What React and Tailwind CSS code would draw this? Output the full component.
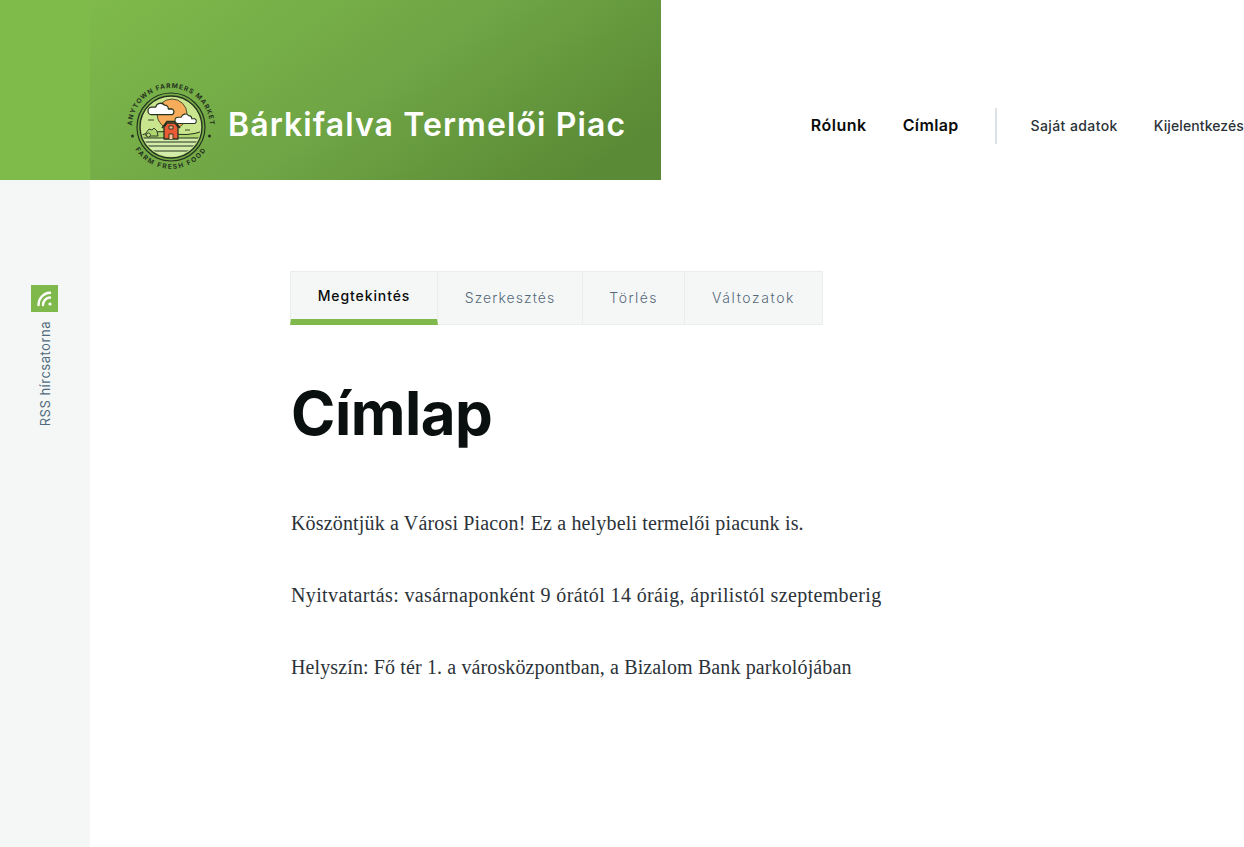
const tabs = [
  { label: "Megtekintés", width: "w-[148px]", tracking: "tracking-[0.9px]", active: true },
  { label: "Szerkesztés", width: "w-[145px]", tracking: "tracking-[1.05px]" },
  { label: "Törlés", width: "w-[102px]", tracking: "tracking-[1.4px]" },
  { label: "Változatok", width: "w-[138px]", tracking: "tracking-[1.6px]" },
];

const paragraphs = [
  { text: "Köszöntjük a Városi Piacon! Ez a helybeli termelői piacunk is.", tracking: "tracking-[0.16px]" },
  { text: "Nyitvatartás: vasárnaponként 9 órától 14 óráig, áprilistól szeptemberig", tracking: "tracking-[0.37px]" },
  { text: "Helyszín: Fő tér 1. a városközpontban, a Bizalom Bank parkolójában", tracking: "tracking-[0.12px]" },
];

function Cloud({ x, y, w }) {
  return (
    <g transform={`translate(${x} ${y}) scale(${w / 22})`}>
      <path
        d="M3 10a3 3 0 0 1 0-6h3a4 4 0 0 1 7-1.500 3 3 0 0 1 3 3h3a2.500 2.500 0 0 1 0 4.500H3z"
        fill="#fff"
        stroke="#26331f"
        strokeWidth="1"
        strokeLinejoin="round"
      />
    </g>
  );
}

function Logo() {
  return (
    <svg viewBox="0 0 88 90" className="h-[90px] w-[88px] shrink-0 overflow-visible" aria-hidden="true">
      <defs>
        <path id="arc-top" d="M5 46A39 39 0 0 1 83 46" />
        <path id="arc-bottom" d="M5.200 62A42 42 0 0 0 82.800 62" />
        <clipPath id="inner-clip">
          <circle cx="44" cy="46" r="29.500" />
        </clipPath>
      </defs>
      <text fill="#26331f" fontFamily="Inter, sans-serif" fontSize="6.600" fontWeight="700" letterSpacing="0.950">
        <textPath href="#arc-top" startOffset="50%" textAnchor="middle">ANYTOWN FARMERS MARKET</textPath>
      </text>
      <text fill="#26331f" fontFamily="Inter, sans-serif" fontSize="6.600" fontWeight="700" letterSpacing="1.500">
        <textPath href="#arc-bottom" startOffset="50%" textAnchor="middle">FARM FRESH FOOD</textPath>
      </text>
      <circle cx="5.500" cy="55" r="1.500" fill="#26331f" />
      <circle cx="82.500" cy="55" r="1.500" fill="#26331f" />
      <circle cx="44" cy="46" r="34" fill="none" stroke="#26331f" strokeWidth="1.200" />
      <circle cx="44" cy="46" r="31" fill="#c9e68e" stroke="#26331f" strokeWidth="1.400" />
      <g clipPath="url(#inner-clip)">
        <circle cx="45" cy="33" r="15" fill="#f6ac5b" stroke="#26331f" strokeWidth="0.800" />
        <path d="M12 55q16-7 32-3t32-2v28H12z" fill="#aed56f" stroke="#26331f" strokeWidth="1" />
        <path d="M12 57h64v22H12z" fill="#d4ecaa" />
        <path d="M12 57h64M12 61h64M12 65h64M12 70h64" stroke="#26331f" strokeWidth="1" />
      </g>
      <path d="M37 58V46l3-4h8l3 4v12z" fill="#e85b34" stroke="#26331f" strokeWidth="1.300" strokeLinejoin="round" />
      <path d="M35 47l5-6.500h8l5 6.500" fill="none" stroke="#26331f" strokeWidth="1.500" />
      <path d="M42 58v-5h4v5M42 45h4v3h-4z" fill="#f6c49a" stroke="#26331f" strokeWidth="0.900" />
      <path d="M19 55v-3l3-4 3 1 2-2 3 3 1 5z" fill="#aed56f" stroke="#26331f" strokeWidth="0.900" />
      <circle cx="21.500" cy="54" r="2" fill="#c9e68e" stroke="#26331f" strokeWidth="0.800" />
      <path d="M21 39h6M58 49h5" stroke="#26331f" strokeWidth="0.900" />
      <Cloud x={21} y={21} w={28} />
      <Cloud x={48} y={32} w={23} />
    </svg>
  );
}

function RssBadge() {
  return (
    <div className="mr-px flex h-[27px] w-[27px] items-center justify-center bg-[#7fb94c]">
      <svg viewBox="0 0 16 16" className="h-[16px] w-[16px]" fill="none" stroke="#fff" strokeWidth="2.400" strokeLinecap="round" aria-hidden="true">
        <path d="M1.500 14C1.500 7.500 6.500 2 13 1.800" />
        <path d="M6 14c0-4 3-7.300 7-7.500" />
        <circle cx="13" cy="13" r="1.600" fill="#fff" stroke="none" />
      </svg>
    </div>
  );
}

export default function App() {
  return (
    <div className="flex min-h-[847px] flex-col overflow-hidden bg-white font-['Inter','Liberation_Sans',sans-serif]">
      <header className="flex h-[180px]">
        <div className="w-[90px] shrink-0 bg-[#7fbb4b]" />
        <div className="flex w-[571px] shrink-0 items-end bg-[linear-gradient(145deg,#7fba4b_0%,#6fa545_50%,#5a8a35_90%)] pb-[9px] pl-[37px]">
          <Logo />
          <h1 className="mb-[28px] ml-[13px] whitespace-nowrap text-[32px] leading-9 font-semibold tracking-[1.1px] text-white">
            Bárkifalva Termelői Piac
          </h1>
        </div>
        <nav className="flex flex-1 items-end justify-end pb-[36px]">
          <div className="flex h-[36px] items-center whitespace-nowrap pb-[2px]">
            <a className="text-[16px] font-semibold tracking-[0.5px] text-[#0a0c0c]">Rólunk</a>
            <a className="ml-[36px] text-[16px] font-semibold tracking-[0.35px] text-[#0a0c0c]">Címlap</a>
            <div className="mt-[2px] ml-[36px] h-[36px] w-[2px] bg-[#dde2e5]" />
            <a className="ml-[34px] text-[14px] font-medium tracking-[0.4px] text-[#2b3238]">Saját adatok</a>
            <a className="ml-[36px] text-[14px] font-medium tracking-[0.1px] text-[#2b3238]">Kijelentkezés</a>
          </div>
        </nav>
      </header>

      <div className="flex flex-1">
        <aside className="flex w-[90px] shrink-0 flex-col items-center bg-[#f5f7f7] pt-[105px]">
          <RssBadge />
          <span className="mt-[9px] rotate-180 text-[13px] leading-[14px] tracking-[0.5px] text-[#4f6a7d] [writing-mode:vertical-rl]">
            RSS hírcsatorna
          </span>
        </aside>

        <main className="flex-1 pt-[91px] pl-[200px]">
          <div className="flex h-[54px] w-[533px]">
            {tabs.map((tab) => (
              <a
                key={tab.label}
                className={`flex items-center justify-center border-t border-r border-[#e9edee] bg-[#f5f7f7] text-[14px] ${tab.width} ${tab.tracking} ${
                  tab.active
                    ? "border-b-[6px] border-b-[#7fb94c] border-l font-medium text-[#0a0c0c]"
                    : "border-b pb-[2px] font-light text-[#55697a]"
                }`}
              >
                {tab.label}
              </a>
            ))}
          </div>

          <h2 className="mt-[50px] ml-px text-[60px] leading-[76px] font-bold tracking-[-0.5px] text-[#0a0f0f]">
            Címlap
          </h2>

          <div className="mt-[54px] ml-px flex flex-col gap-[36px] font-['Liberation_Serif',serif] text-[20px] leading-9 text-[#2b3238]">
            {paragraphs.map((p) => (
              <p key={p.text} className={p.tracking}>{p.text}</p>
            ))}
          </div>
        </main>
      </div>
    </div>
  );
}
